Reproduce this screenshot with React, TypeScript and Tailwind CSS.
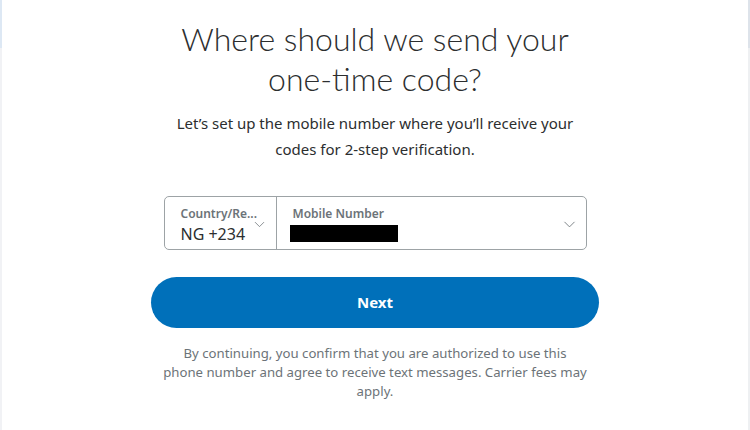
import { ChevronDown } from "lucide-react"

const font = { fontFamily: "'Noto Sans', 'Open Sans', sans-serif" }

export default function App() {
  return (
    <div className="flex h-[430px] w-[750px] overflow-hidden bg-white" style={font}>
      {/* left edge strip */}
      <div className="flex w-[2px] flex-col">
        <div className="h-[48px] bg-[#dde8f4]" />
        <div className="flex-1 bg-[#f1f2f5]" />
      </div>

      <div className="flex flex-1 flex-col items-center">
        <h1
          className="mt-[19px] text-center text-[32px] font-light leading-[40px] text-[#2c2e2f]"
          style={{ fontFamily: "Lato, 'Noto Sans', sans-serif" }}
        >
          Where should we send your
          <br />
          one-time code?
        </h1>

        <p className="mt-[11px] w-[430px] text-center text-[15px] leading-[26px] text-[#2c2e2f]">
          Let’s set up the mobile number where you’ll receive your codes for 2-step verification.
        </p>

        {/* phone input */}
        <div className="mt-[34px] flex h-[54px] w-[423px] rounded-[5px] border border-[#9da3a6]">
          <div className="relative flex w-[112px] flex-col border-r border-[#9da3a6] pl-[16px] pt-[8px]">
            <span className="text-[12px] font-semibold leading-[18px] text-[#6c7378]">Country/Re...</span>
            <span className="text-[16px] leading-[22px] text-[#2c2e2f]">NG +234</span>
            <ChevronDown className="absolute right-[8px] top-[19px] h-[17px] w-[17px] text-[#6c7378]" strokeWidth={1.1} />
          </div>
          <div className="relative flex flex-1 flex-col pl-[16px] pt-[8px]">
            <span className="text-[12px] font-semibold leading-[18px] text-[#6c7378]">Mobile Number</span>
            <div className="ml-[-3px] mt-[2px] h-[17px] w-[108px] bg-black" />
            <ChevronDown className="absolute right-[7px] top-[18px] h-[19px] w-[19px] text-[#6c7378]" strokeWidth={1.1} />
          </div>
        </div>

        <button className="mt-[27px] h-[51px] w-[448px] rounded-full bg-[#0070ba] text-[15px] font-bold text-white">
          Next
        </button>

        <p className="mt-[16px] w-[426px] text-center text-[13.2px] leading-[19px] text-[#6c7378]">
          By continuing, you confirm that you are authorized to use this phone number and agree to receive text messages. Carrier fees may apply.
        </p>
      </div>

      {/* right edge strip */}
      <div className="flex w-[2px] flex-col">
        <div className="h-[48px] bg-[#dde3ea]" />
        <div className="flex-1 bg-[#eef0f2]" />
      </div>
    </div>
  )
}
